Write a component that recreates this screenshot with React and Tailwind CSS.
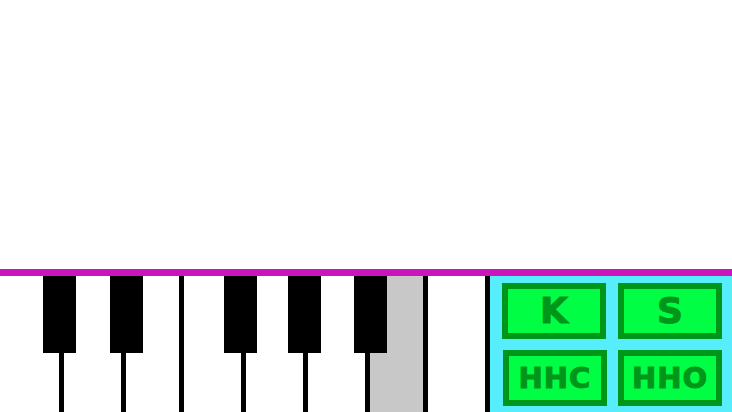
import React from "react";

const whiteKeys = [64, 62, 58, 62, 62, 62, 58, 62];
const blackKeys = [43, 110, 224, 288, 354];

function Pad({ label, big, className = "" }) {
  return (
    <div
      className={`w-[104px] h-[56px] border-[6px] border-[#00961a] bg-[#00ff44] flex items-center justify-center text-[#00961a] font-bold font-['DejaVu_Sans',sans-serif] leading-none [-webkit-text-stroke:1px_#00961a] ${
        big ? "text-[36px]" : "text-[29px] tracking-[1px]"
      } ${className}`}
    >
      {label}
    </div>
  );
}

export default function App() {
  return (
    <div className="w-[732px] h-[412px] flex flex-col bg-white overflow-hidden">
      <div className="h-[269px] bg-white" />
      <div className="h-[7px] bg-[#cc14bb]" />
      <div className="flex h-[136px]">
        <div className="relative flex w-[490px] h-full">
          {whiteKeys.map((w, i) => (
            <div
              key={i}
              style={{ width: w }}
              className={`h-full border-r-[5px] border-black ${
                i === 6 ? "bg-[#c8c8c8]" : "bg-white"
              }`}
            />
          ))}
          {blackKeys.map((l, i) => (
            <div
              key={i}
              style={{ left: l }}
              className="absolute top-0 w-[33px] h-[77px] bg-black"
            />
          ))}
        </div>
        <div className="flex-1 bg-[#56eefc] pl-[12px] pt-[7px] grid grid-cols-[104px_104px] grid-rows-[56px_56px] gap-x-[12px] gap-y-[11px]">
          <Pad label="K" big />
          <Pad label="S" big />
          <Pad label="HHC" className="ml-px" />
          <Pad label="HHO" />
        </div>
      </div>
    </div>
  );
}
